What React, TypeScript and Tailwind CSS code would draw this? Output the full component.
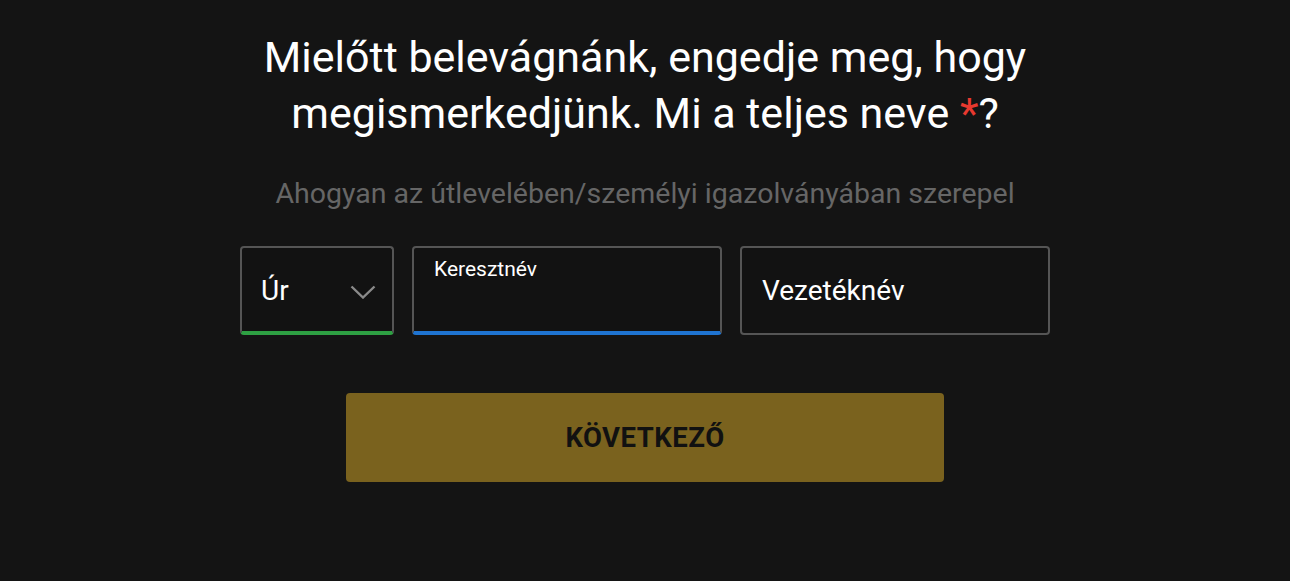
export default function App() {
  return (
    <div
      className="flex min-h-[581px] w-full flex-col items-center bg-[#141414] pt-[29px]"
      style={{ fontFamily: "Roboto, 'Liberation Sans', sans-serif" }}
    >
      <h1 className="whitespace-nowrap text-center text-[43px] font-normal leading-[56px] text-white">
        Mielőtt belevágnánk, engedje meg, hogy
        <br />
        megismerkedjünk. Mi a teljes neve <span className="text-[#e8392f]">*</span>?
      </h1>
      <p className="mt-[36px] whitespace-nowrap text-center text-[28.5px] leading-[34px] text-[#666666]">
        Ahogyan az útlevelében/személyi igazolványában szerepel
      </p>

      <div className="mt-[35px] flex gap-[18px]">
        <div className="relative flex h-[89px] w-[154px] items-center rounded-[4px] border-2 border-b-[4px] border-[#555555] border-b-[#2ea043] bg-[#121212] pl-[19px] pt-[2px]">
          <span className="text-[28px] text-white">Úr</span>
          <svg
            className="absolute right-[16px] top-[37px]"
            width="26"
            height="14"
            viewBox="0 0 26 14"
            fill="none"
          >
            <path d="M1.5 1.5 13 12.5 24.5 1.5" stroke="#8a8a8a" strokeWidth="2.4" />
          </svg>
        </div>
        <div className="relative h-[89px] w-[310px] rounded-[4px] border-2 border-b-[4px] border-[#555555] border-b-[#1f74d1] bg-[#121212]">
          <span className="absolute left-[20px] top-[6px] text-[21px] text-white">Keresztnév</span>
        </div>
        <div className="flex h-[89px] w-[310px] items-center rounded-[4px] border-2 border-[#555555] bg-[#121212] pl-[20px]">
          <span className="text-[28px] text-white">Vezetéknév</span>
        </div>
      </div>

      <button
        type="button"
        className="mt-[58px] h-[89px] w-[598px] rounded-[4px] bg-[#7a621e] text-[27.5px] font-bold tracking-[0.5px] text-[#111111]"
      >
        KÖVETKEZŐ
      </button>
    </div>
  );
}
